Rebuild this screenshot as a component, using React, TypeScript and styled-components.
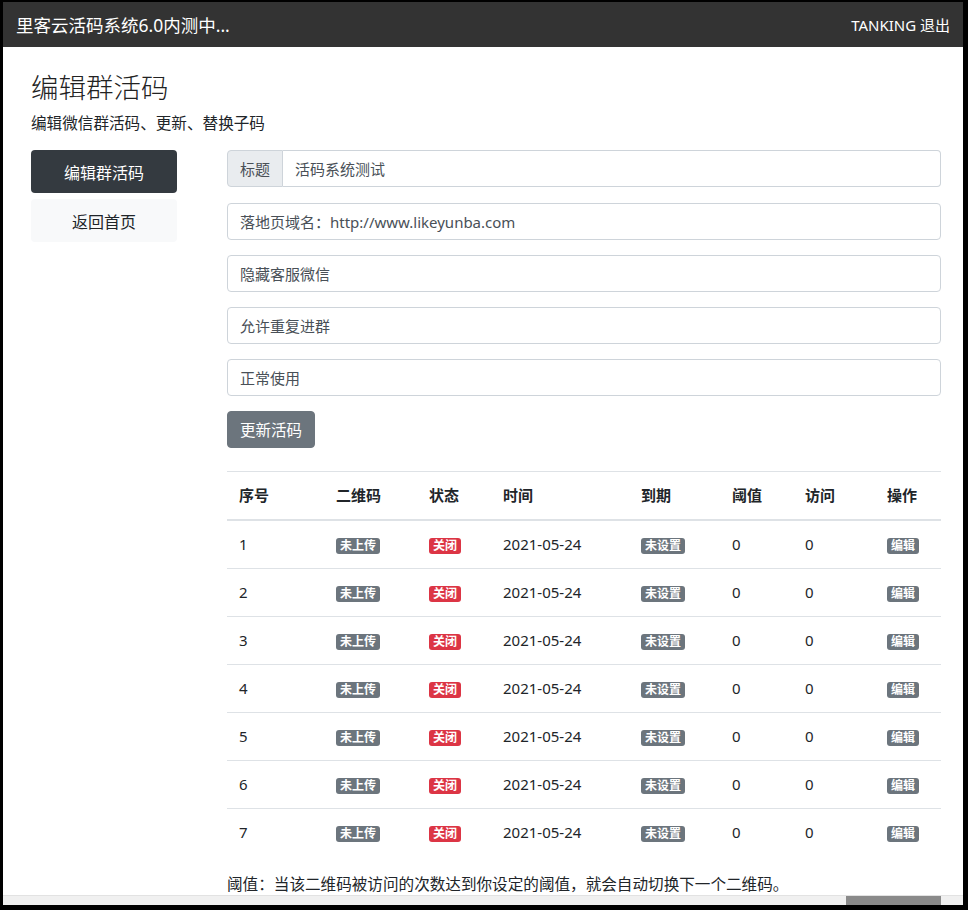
import * as React from "react";
import styled, { createGlobalStyle } from "styled-components";

const GlobalStyle = createGlobalStyle`
  html, body {
    margin: 0;
    padding: 0;
    background: #000;
  }
  * {
    box-sizing: border-box;
  }
`;

const rows = [1, 2, 3, 4, 5, 6, 7].map((n) => ({
  id: n,
  time: "2021-05-24",
  threshold: 0,
  visits: 0,
}));

const fields = ["落地页域名：http://www.likeyunba.com", "隐藏客服微信", "允许重复进群", "正常使用"];

export default function App() {
  return (
    <>
      <GlobalStyle />
      <Frame>
        <Navbar>
          <Brand>里客云活码系统6.0内测中...</Brand>
          <NavUser>TANKING 退出</NavUser>
        </Navbar>
        <Main>
          <Title>编辑群活码</Title>
          <Lead>编辑微信群活码、更新、替换子码</Lead>
          <Columns>
            <Sidebar>
              <SideButton active>编辑群活码</SideButton>
              <SideButton>返回首页</SideButton>
            </Sidebar>
            <Content>
              <InputGroup>
                <Prepend>标题</Prepend>
                <GroupInput readOnly value="活码系统测试" />
              </InputGroup>
              {fields.map((f) => (
                <Input key={f} readOnly value={f} />
              ))}
              <SubmitButton>更新活码</SubmitButton>
              <Table>
                <colgroup>
                  <col style={{ width: 97 }} />
                  <col style={{ width: 93 }} />
                  <col style={{ width: 74 }} />
                  <col style={{ width: 138 }} />
                  <col style={{ width: 91 }} />
                  <col style={{ width: 73 }} />
                  <col style={{ width: 82 }} />
                  <col />
                </colgroup>
                <thead>
                  <tr>
                    <Th>序号</Th>
                    <Th>二维码</Th>
                    <Th>状态</Th>
                    <Th>时间</Th>
                    <Th>到期</Th>
                    <Th>阈值</Th>
                    <Th>访问</Th>
                    <Th>操作</Th>
                  </tr>
                </thead>
                <tbody>
                  {rows.map((r) => (
                    <tr key={r.id}>
                      <Td>{r.id}</Td>
                      <Td>
                        <Badge>未上传</Badge>
                      </Td>
                      <Td>
                        <Badge tone="danger">关闭</Badge>
                      </Td>
                      <Td>{r.time}</Td>
                      <Td>
                        <Badge>未设置</Badge>
                      </Td>
                      <Td>{r.threshold}</Td>
                      <Td>{r.visits}</Td>
                      <Td>
                        <Badge>编辑</Badge>
                      </Td>
                    </tr>
                  ))}
                </tbody>
              </Table>
              <Note>阈值：当该二维码被访问的次数达到你设定的阈值，就会自动切换下一个二维码。</Note>
            </Content>
          </Columns>
        </Main>
        <ScrollTrack>
          <ScrollThumb />
        </ScrollTrack>
      </Frame>
    </>
  );
}

const Frame = styled.div`
  margin: 2px 5px 5px 3px;
  height: 903px;
  background: #fff;
  display: flex;
  flex-direction: column;
  overflow: hidden;
  font-family: "Noto Sans", "Noto Sans CJK SC", sans-serif;
  color: #212529;
`;

const Navbar = styled.header`
  flex: 0 0 45px;
  background: #333;
  display: flex;
  align-items: center;
  justify-content: space-between;
  padding: 0 13px 0 13px;
  color: #fff;
`;

const Brand = styled.div`
  font-size: 17.5px;
`;

const NavUser = styled.div`
  font-size: 15px;
`;

const Main = styled.main`
  flex: 1;
  min-height: 0;
  overflow: hidden;
  padding: 24px 22px 0 28px;
`;

const Title = styled.h1`
  margin: 0;
  font-size: 27.5px;
  font-weight: 300;
  line-height: 34px;
  color: #222;
`;

const Lead = styled.p`
  margin: 6px 0 15px;
  font-size: 15.6px;
  line-height: 24px;
  color: #212529;
`;

const Columns = styled.div`
  display: flex;
  gap: 50px;
  align-items: flex-start;
`;

const Sidebar = styled.nav`
  flex: 0 0 146px;
  display: flex;
  flex-direction: column;
  gap: 6px;
`;

const SideButton = styled.div<{ active?: boolean }>`
  height: 43px;
  border-radius: 4px;
  display: flex;
  align-items: center;
  justify-content: center;
  font-size: 16px;
  background: ${(p) => (p.active ? "#343a40" : "#f8f9fa")};
  color: ${(p) => (p.active ? "#fff" : "#212529")};
`;

const Content = styled.section`
  flex: 1;
  min-width: 0;
  display: flex;
  flex-direction: column;
  align-items: flex-start;
`;

const InputGroup = styled.div`
  width: 100%;
  height: 37px;
  display: flex;
  margin-bottom: 16px;
`;

const Prepend = styled.span`
  display: flex;
  align-items: center;
  padding: 0 12px;
  font-size: 15px;
  color: #495057;
  background: #e9ecef;
  border: 1px solid #ced4da;
  border-radius: 4px 0 0 4px;
`;

const Input = styled.input`
  width: 100%;
  height: 37px;
  margin: 0 0 15px;
  padding: 0 12px;
  font-family: inherit;
  font-size: 15px;
  color: #495057;
  background: #fff;
  border: 1px solid #ced4da;
  border-radius: 4px;
  outline: none;
`;

const GroupInput = styled(Input)`
  flex: 1;
  margin: 0;
  border-left: none;
  border-radius: 0 4px 4px 0;
`;

const SubmitButton = styled.button`
  height: 37px;
  padding: 0 12px;
  margin-top: 0;
  font-family: inherit;
  font-size: 15.5px;
  color: #fff;
  background: #6c757d;
  border: 1px solid #6c757d;
  border-radius: 4px;
`;

const Table = styled.table`
  width: 100%;
  margin-top: 23px;
  border-collapse: collapse;
  table-layout: fixed;
  font-size: 15px;
`;

const Th = styled.th`
  text-align: left;
  font-weight: 700;
  padding: 11px 12px 12px;
  line-height: 24px;
  border-top: 1px solid #dee2e6;
  border-bottom: 2px solid #dee2e6;
`;

const Td = styled.td`
  padding: 12px;
  line-height: 23px;
  border-top: 1px solid #dee2e6;
  vertical-align: middle;
  color: #212529;
`;

const Badge = styled.span<{ tone?: "danger" }>`
  display: inline-block;
  padding: 0 4px;
  font-size: 12px;
  font-weight: 700;
  line-height: 16px;
  color: #fff;
  border-radius: 3px;
  vertical-align: middle;
  background: ${(p) => (p.tone === "danger" ? "#dc3545" : "#6c757d")};
`;

const Note = styled.p`
  margin: 16px 0 0;
  font-size: 15.6px;
  line-height: 24px;
`;

const ScrollTrack = styled.div`
  flex: 0 0 10px;
  display: flex;
  justify-content: flex-end;
  padding-right: 22px;
  background: #f0f0f0;
  border-top: 1px solid #e2e2e2;
`;

const ScrollThumb = styled.div`
  width: 95px;
  background: #8a8a8a;
`;
